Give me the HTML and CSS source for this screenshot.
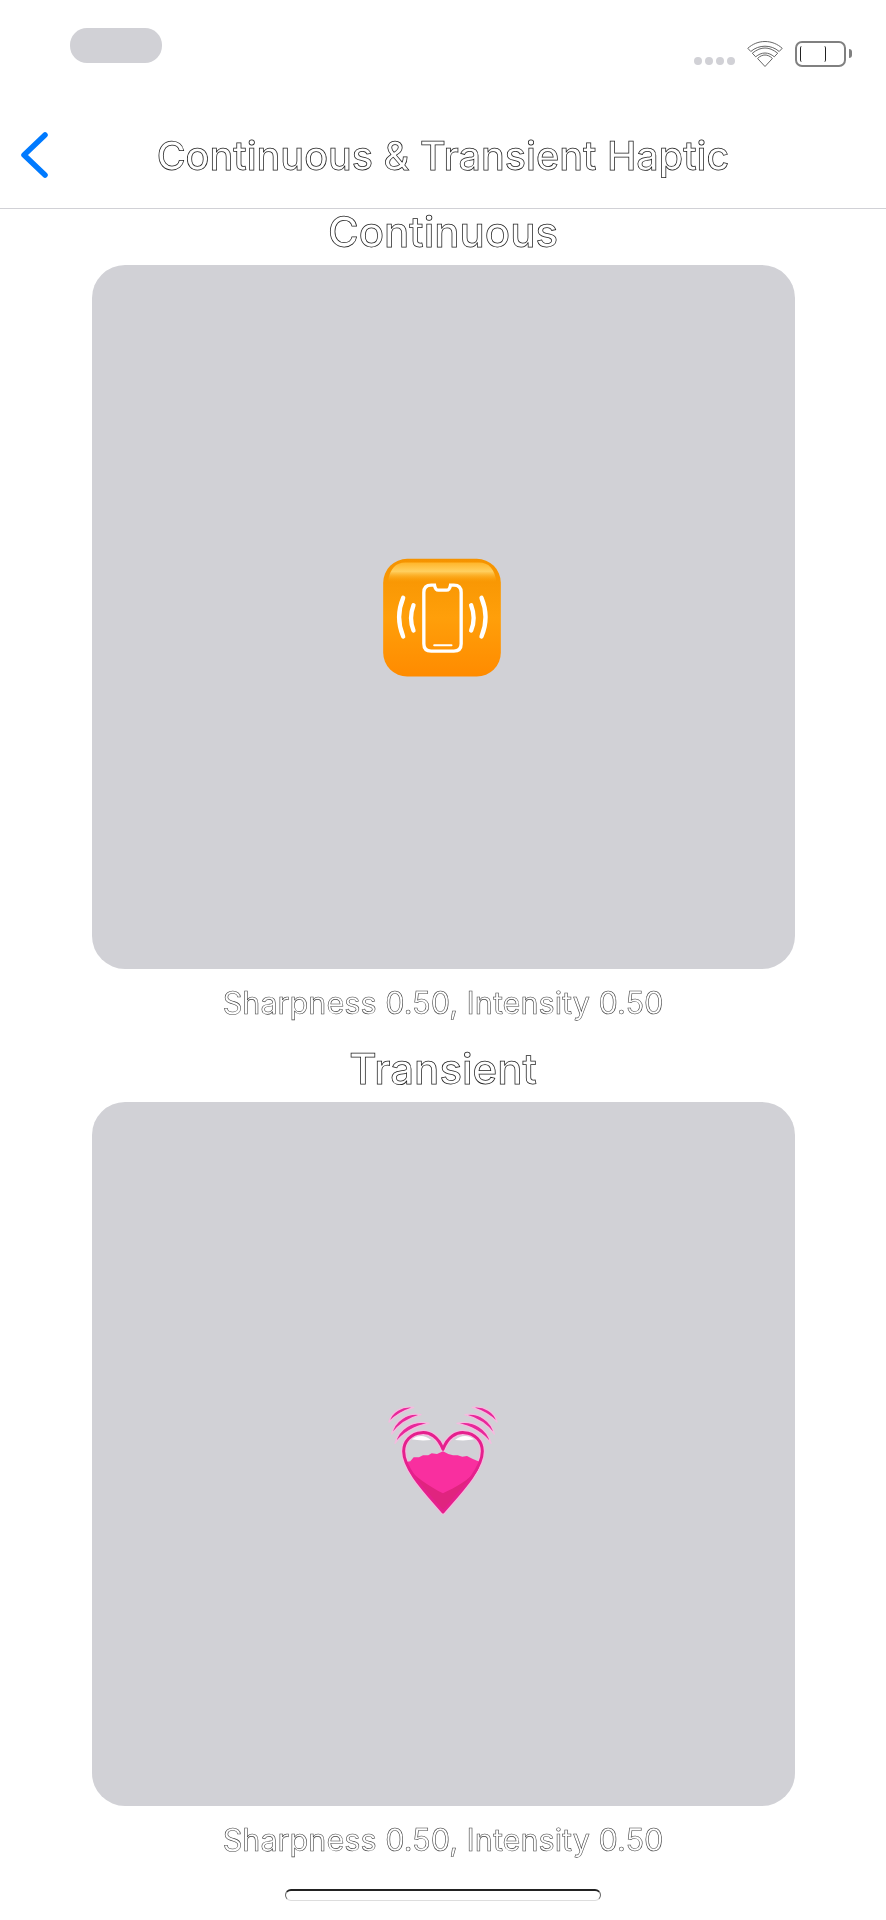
FILE: index.html
```html
<!DOCTYPE html>
<html lang="en">
<head>
<meta charset="utf-8">
<title>Continuous &amp; Transient Haptic</title>
<link rel="stylesheet" href="styles.css">
</head>
<body>
<div class="screen">
  <header class="status">
    <div class="pill"></div>
    <div class="status-right">
      <div class="dots"><i></i><i></i><i></i><i></i></div>
      <svg class="wifi" width="36" height="26" viewBox="0 0 36 26">
        <g fill="#fff" stroke="#555" stroke-width="0.9" stroke-linejoin="round">
          <path d="M18 .5C11.500 .5 5.500 3 .8 7.300L3.800 10.500C7.800 7 12.700 5.200 18 5.200S28.200 7 32.200 10.500L35.200 7.300C30.500 3 24.500 .5 18 .5Z"/>
          <path d="M18 7C14 7 10 8.500 5.300 12.200L8.700 15.800C11.400 13.500 14.600 12 18 12S24.600 13.500 27.300 15.800L30.700 12.200C26 8.500 22 7 18 7Z"/>
          <path d="M18 14C15.600 14 13 15 10.600 17.500L18 25.500L25.400 17.500C23 15 20.400 14 18 14Z"/>
        </g>
      </svg>
      <div class="battery"><div class="battery-level"></div></div>
      <div class="battery-nub"></div>
    </div>
  </header>
  <nav class="nav">
    <svg class="back" width="28" height="46" viewBox="0 0 28 46">
      <path d="M25 3L4 23L25 43" fill="none" stroke="#007aff" stroke-width="5.500" stroke-linecap="round" stroke-linejoin="round"/>
    </svg>
    <h1 class="nav-title">Continuous &amp; Transient Haptic</h1>
  </nav>
  <main class="content">
    <section class="section">
      <h2 class="section-title">Continuous</h2>
      <div class="pad">
        <svg class="emoji" width="160" height="160" viewBox="1.500 -10.500 480 480">
          <defs>
            <linearGradient id="orange" x1="0" y1="0" x2="0" y2="1">
              <stop offset="0" stop-color="#f59300"/>
              <stop offset="0.5" stop-color="#ff9f0a"/>
              <stop offset="1" stop-color="#ff8b00"/>
            </linearGradient>
            <linearGradient id="shine" x1="0" y1="0" x2="0" y2="1">
              <stop offset="0" stop-color="#ffb52a"/>
              <stop offset="0.45" stop-color="#ffd060"/>
              <stop offset="1" stop-color="#ffa50c" stop-opacity="0"/>
            </linearGradient>
          </defs>
          <rect x="62" y="55" width="353" height="353" rx="72" fill="url(#orange)"/>
          <path d="M128 66H350C378 66 396 84 402 125H76C82 84 100 66 128 66Z" fill="url(#shine)"/>
          <g fill="none" stroke="#fff" stroke-linecap="round">
            <path stroke-width="10" d="M206 134H216C218 146 222 149 228 149H252C258 149 262 146 264 134H274C288 134 296 142 296 156V310C296 324 288 332 274 332H206C192 332 184 324 184 310V156C184 142 192 134 206 134Z"/>
            <path stroke-width="6" d="M215 314H267"/>
            <path stroke-width="13" d="M153 194C143 220 143 245 153 270"/>
            <path stroke-width="13" d="M122 172C106 210 106 250 122 288"/>
            <path stroke-width="13" d="M326 194C336 220 336 245 326 270"/>
            <path stroke-width="13" d="M357 172C373 210 373 250 357 288"/>
          </g>
        </svg>
      </div>
      <p class="caption">Sharpness 0.50, Intensity 0.50</p>
    </section>
    <section class="section">
      <h2 class="section-title">Transient</h2>
      <div class="pad">
        <svg class="emoji" width="160" height="143" viewBox="0 -9 480 429">
          <path d="M240 190C226 152 200 138 176 140C144 142 122 166 122 196C122 250 190 320 240 378C290 320 358 250 358 196C358 166 336 142 304 140C280 138 254 152 240 190Z" fill="none" stroke="#f4bcdf" stroke-width="16" stroke-linejoin="round"/>
          <path d="M146 160C165 146 185 146 204 162C185 164 165 164 146 160ZM276 162C295 146 315 146 334 160C315 164 295 164 276 162Z" fill="#fff"/>
          <path d="M128 228L142 226L152 214L168 214L180 208L196 208L206 202L222 204L240 196L256 204L270 208L284 208L298 212L312 210L328 218L342 224L352 228C345 262 290 320 240 378C190 320 136 265 128 228Z" fill="#f92f9f"/>
          <path d="M130 236C150 272 205 304 240 322C275 304 320 285 350 240C335 276 285 325 240 378C195 325 145 278 130 236Z" fill="#e0247f"/>
          <path d="M240 190C226 152 200 138 176 140C144 142 122 166 122 196C122 250 190 320 240 378C290 320 358 250 358 196C358 166 336 142 304 140C280 138 254 152 240 190Z" fill="none" stroke="#e5208d" stroke-width="9" stroke-linejoin="round"/>
          <g fill="#e8289a" stroke="#f4bcdf" stroke-width="4" stroke-linejoin="round">
            <path d="M78 108C84 78 118 58 152 64C122 74 98 86 78 108Z"/>
            <path d="M86 144C94 104 134 78 174 86C138 96 108 114 86 144Z"/>
            <path d="M96 172C106 128 150 100 198 112C156 120 122 138 96 172Z"/>
            <path d="M402 108C396 78 362 58 328 64C358 74 382 86 402 108Z"/>
            <path d="M394 144C386 104 346 78 306 86C342 96 372 114 394 144Z"/>
            <path d="M384 172C374 128 330 100 282 112C324 120 358 138 384 172Z"/>
          </g>
        </svg>
      </div>
      <p class="caption">Sharpness 0.50, Intensity 0.50</p>
    </section>
  </main>
  <div class="home"></div>
</div>
</body>
</html>
```
FILE: styles.css
```css
* { box-sizing: border-box; }
html, body { margin: 0; padding: 0; background: #fff; }
body { font-family: Inter, "Liberation Sans", sans-serif; }
.screen { width: 886px; height: 1920px; overflow: hidden; display: flex; flex-direction: column; }
.status { height: 110px; padding: 28px 34px 0 70px; display: flex; justify-content: space-between; align-items: flex-start; }
.pill { width: 92px; height: 35px; border-radius: 17px; background: #d1d1d6; }
.status-right { display: flex; align-items: flex-start; padding-top: 13px; }
.dots { display: flex; gap: 3px; margin: 16px 12px 0 0; }
.dots i { display: block; width: 8px; height: 8px; border-radius: 50%; background: #d1d1d6; }
.wifi { margin-right: 12px; }
.battery { width: 51px; height: 26px; border: 2px solid #808080; border-radius: 7px; padding: 3px; background: #fff; }
.battery-level { width: 26px; height: 100%; background: #fff; border: 1px solid #222; border-width: 0 1px; border-radius: 2px; }
.battery-nub { width: 3px; height: 9px; margin: 8px 0 0 3px; border-radius: 0 3px 3px 0; background: #808080; }
.nav { height: 99px; border-bottom: 1px solid #d1d1d6; display: grid; grid-template-columns: 1fr auto 1fr; align-items: start; padding-top: 22px; }
.back { grid-column: 1; margin-left: 20px; }
.nav-title, .section-title, .caption { margin: 0; color: #fff; -webkit-text-stroke: 0.75px #222; text-align: center; will-change: opacity; white-space: nowrap; }
.nav-title { grid-column: 2; font-size: 39.5px; line-height: 44px; font-weight: 500; margin-top: 2px; }
.content { display: flex; flex-direction: column; align-items: center; }
.section { width: 703px; display: flex; flex-direction: column; }
.section-title { height: 56px; font-size: 42px; line-height: 46px; font-weight: 500; }
.pad { width: 703px; height: 704px; border-radius: 33px; background: #d1d1d6; display: flex; align-items: center; justify-content: center; }
.caption { height: 77px; padding-top: 16px; font-size: 30.6px; line-height: 36px; font-weight: 400; -webkit-text-stroke: 0.6px #444; }
.home { width: 316px; height: 12px; margin: 6px auto 0; border: 1px solid #666; border-top: 2px solid #222; border-bottom-color: #ddd; border-radius: 6px; background: #fff; }
```
